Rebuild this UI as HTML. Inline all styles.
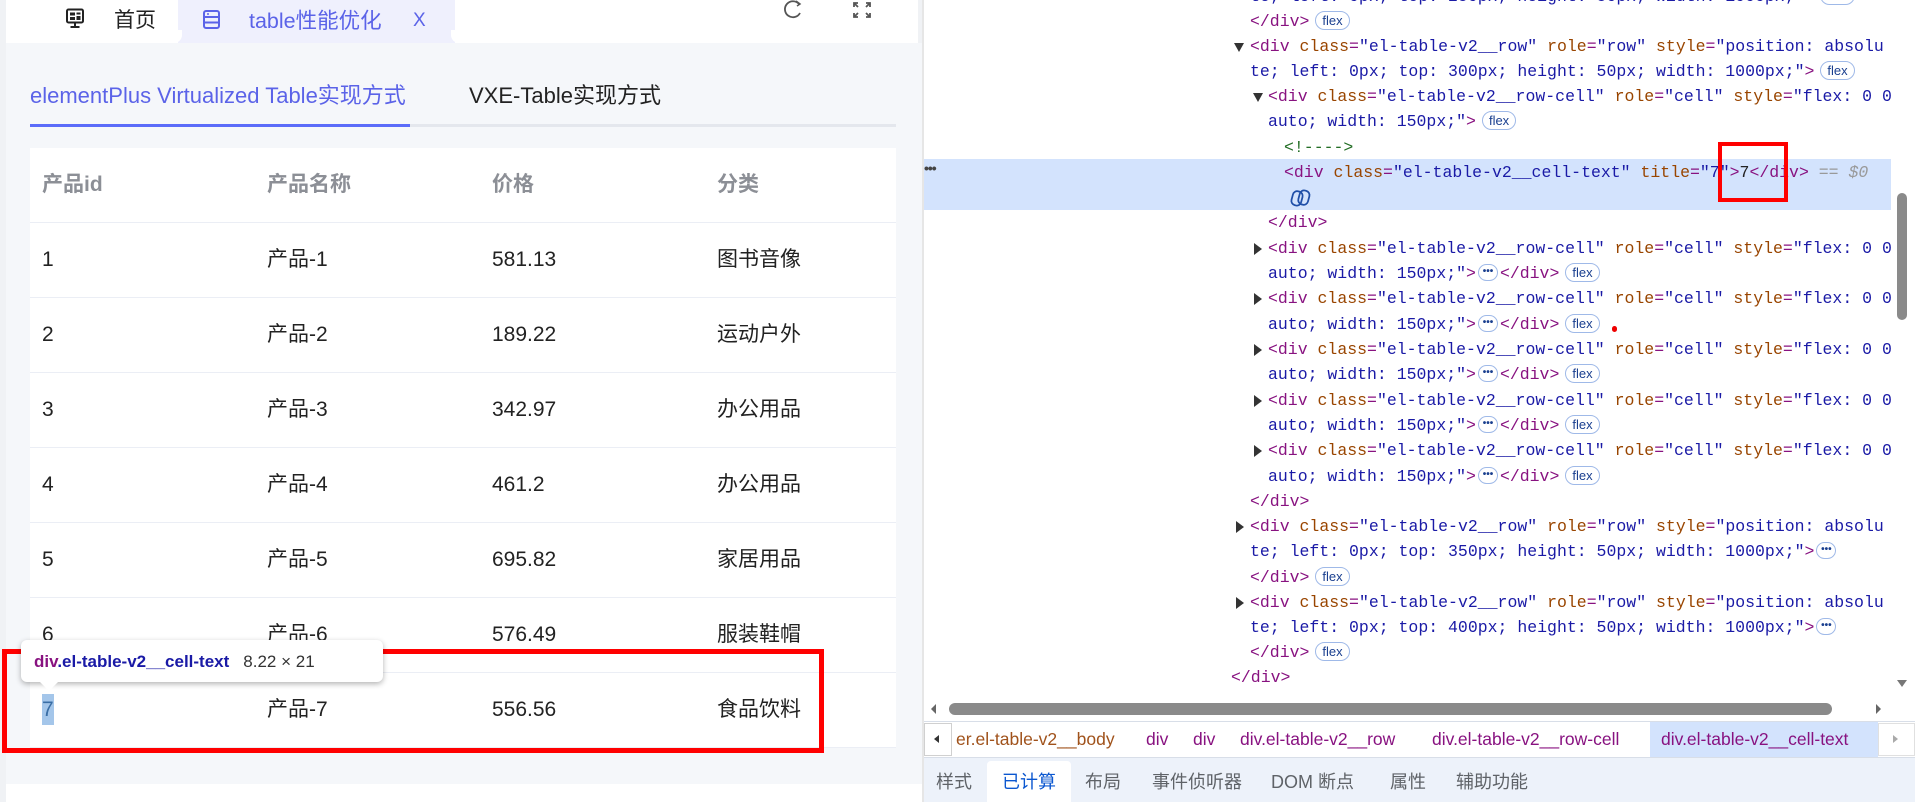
<!DOCTYPE html>
<html><head><meta charset="utf-8">
<style>
*{margin:0;padding:0;box-sizing:border-box}
body{width:1915px;height:802px;overflow:hidden;position:relative;background:#fff;font-family:"Liberation Sans","Noto Sans CJK SC",sans-serif}
.abs{position:absolute}
.cell{position:absolute;font-size:21px;color:#222;white-space:nowrap;line-height:24px}
.hd{color:#8c8f96;font-weight:bold}
.rowline{position:absolute;left:30px;width:866px;height:1px;background:#ebeef5}
.code{position:absolute;font-family:"Liberation Mono",monospace;font-size:16.5px;white-space:pre;height:25px;line-height:25px;color:#1a1aa6}
.t{color:#881280}.a{color:#994500}.v{color:#1a1aa6}.c{color:#236e25}
.b{display:inline-block;font-family:"Liberation Sans",sans-serif;font-size:13px;line-height:17px;height:19px;padding:0 6px;border:1px solid #9fb9e8;border-radius:10px;color:#1a3f8f;vertical-align:middle;margin-left:6px;position:relative;top:-1px}
.e{display:inline-block;width:20px;height:17px;border:1px solid #9fb9e8;border-radius:9px;vertical-align:middle;font-size:10px;line-height:14px;text-align:center;color:#1a3f8f;font-family:"Liberation Sans",sans-serif;font-weight:bold;position:relative;top:-1px;margin:0 2px}
.tri{position:absolute;width:0;height:0}
.rt{border-top:6px solid transparent;border-bottom:6px solid transparent;border-left:8px solid #333}
.dt{border-left:5px solid transparent;border-right:5px solid transparent;border-top:9px solid #333}
.bc{position:absolute;top:727px;font-size:17.5px;line-height:24px;color:#881280;white-space:nowrap}
.bt{position:absolute;top:770px;font-size:18px;line-height:24px;color:#5f6368;white-space:nowrap}
</style></head><body>

<div class="abs" style="left:0;top:0;width:922px;height:802px;background:#f0f2f5"></div>
<div class="abs" style="left:6px;top:43px;width:916px;height:741px;background:#f5f7fa"></div>
<div class="abs" style="left:6px;top:784px;width:916px;height:18px;background:#fff"></div>
<div class="abs" style="left:6px;top:0;width:912px;height:43px;background:#fff"></div>
<div class="abs" style="left:178px;top:0;width:277px;height:43px;background:#eff0fd"></div>
<div class="abs" style="left:172px;top:30px;width:10px;height:13px;background:#fff;border-bottom-right-radius:8px"></div>
<div class="abs" style="left:451px;top:30px;width:10px;height:13px;background:#fff;border-bottom-left-radius:8px"></div>
<svg class="abs" style="left:66px;top:8px" width="18" height="22" viewBox="0 0 18 22"><rect x="1" y="1.5" width="16" height="13" rx="1.5" fill="none" stroke="#222" stroke-width="2"/><rect x="4" y="4.5" width="5" height="3" fill="#222"/><rect x="4" y="9" width="5" height="3" fill="#222"/><rect x="10.5" y="4.5" width="4" height="2" fill="#222"/><rect x="10.5" y="8" width="4" height="4" fill="#222"/><rect x="8" y="15" width="2" height="3" fill="#222"/><rect x="4.5" y="18" width="9" height="2" fill="#222"/></svg>
<div class="cell" style="left:114px;top:9px;color:#222">首页</div>
<svg class="abs" style="left:203px;top:10px" width="17" height="19" viewBox="0 0 17 19"><rect x="1" y="1" width="15" height="17" rx="2" fill="none" stroke="#5b63e8" stroke-width="2"/><line x1="1" y1="7" x2="16" y2="7" stroke="#5b63e8" stroke-width="2"/><line x1="1" y1="12.5" x2="16" y2="12.5" stroke="#5b63e8" stroke-width="2"/><line x1="4" y1="4" x2="6" y2="4" stroke="#5b63e8" stroke-width="1.5"/></svg>
<div class="cell" style="left:249px;top:9px;color:#5b63e8;font-size:21.5px">table性能优化</div>
<div class="cell" style="left:413px;top:9px;color:#5b63e8;font-size:19px">X</div>
<svg class="abs" style="left:782px;top:0" width="22" height="20" viewBox="0 0 22 20"><path d="M17 4 A8 8 0 1 0 18 13" fill="none" stroke="#555" stroke-width="1.8"/><path d="M14 1 L18 4 L15 6" fill="none" stroke="#555" stroke-width="1.5"/></svg>
<svg class="abs" style="left:852px;top:1px" width="20" height="18" viewBox="0 0 20 18"><g fill="none" stroke="#555" stroke-width="1.8"><path d="M2 6V2h4M2 2l4 4"/><path d="M18 6V2h-4M18 2l-4 4"/><path d="M2 12v4h4M2 16l4-4"/><path d="M18 12v4h-4M18 16l-4-4"/></g></svg>

<div class="cell" style="left:30px;top:84px;color:#5b63e8;font-size:22px">elementPlus Virtualized Table实现方式</div>
<div class="cell" style="left:469px;top:84px;color:#222;font-size:22px">VXE-Table实现方式</div>
<div class="abs" style="left:30px;top:124px;width:866px;height:3px;background:#e4e7ed"></div>
<div class="abs" style="left:30px;top:124px;width:380px;height:3px;background:#5b6cf9"></div>

<div class="abs" style="left:30px;top:148px;width:866px;height:599px;background:#fff"></div>
<div class="cell hd" style="left:42px;top:173px">产品id</div>
<div class="cell hd" style="left:267px;top:173px">产品名称</div>
<div class="cell hd" style="left:492px;top:173px">价格</div>
<div class="cell hd" style="left:717px;top:173px">分类</div>
<div class="rowline" style="top:222px"></div>
<div class="rowline" style="top:297px"></div>
<div class="rowline" style="top:372px"></div>
<div class="rowline" style="top:447px"></div>
<div class="rowline" style="top:522px"></div>
<div class="rowline" style="top:597px"></div>
<div class="rowline" style="top:672px"></div>
<div class="rowline" style="top:747px"></div>

<div class="cell" style="left:42px;top:248px">1</div><div class="cell" style="left:267px;top:248px">产品-1</div><div class="cell" style="left:492px;top:248px">581.13</div><div class="cell" style="left:717px;top:248px">图书音像</div>
<div class="cell" style="left:42px;top:323px">2</div><div class="cell" style="left:267px;top:323px">产品-2</div><div class="cell" style="left:492px;top:323px">189.22</div><div class="cell" style="left:717px;top:323px">运动户外</div>
<div class="cell" style="left:42px;top:398px">3</div><div class="cell" style="left:267px;top:398px">产品-3</div><div class="cell" style="left:492px;top:398px">342.97</div><div class="cell" style="left:717px;top:398px">办公用品</div>
<div class="cell" style="left:42px;top:473px">4</div><div class="cell" style="left:267px;top:473px">产品-4</div><div class="cell" style="left:492px;top:473px">461.2</div><div class="cell" style="left:717px;top:473px">办公用品</div>
<div class="cell" style="left:42px;top:548px">5</div><div class="cell" style="left:267px;top:548px">产品-5</div><div class="cell" style="left:492px;top:548px">695.82</div><div class="cell" style="left:717px;top:548px">家居用品</div>
<div class="cell" style="left:42px;top:623px">6</div><div class="cell" style="left:267px;top:623px">产品-6</div><div class="cell" style="left:492px;top:623px">576.49</div><div class="cell" style="left:717px;top:623px">服装鞋帽</div>
<div class="abs" style="left:42px;top:694px;width:12px;height:31px;background:#a4c6ea"></div>
<div class="cell" style="left:42px;top:698px;color:#3a6ea5">7</div><div class="cell" style="left:267px;top:698px">产品-7</div><div class="cell" style="left:492px;top:698px">556.56</div><div class="cell" style="left:717px;top:698px">食品饮料</div>

<div class="abs" style="left:2px;top:649px;width:822px;height:104px;border:5px solid #ff0000"></div>
<div class="abs" style="left:21px;top:640px;width:362px;height:42px;background:#fff;border-radius:6px;box-shadow:0 2px 6px rgba(0,0,0,.3)"></div>
<div class="abs" style="left:39px;top:681px;width:0;height:0;border-left:10px solid transparent;border-right:10px solid transparent;border-top:10px solid #fff"></div>
<div class="abs" style="left:34px;top:650px;font-size:17px;line-height:24px;white-space:nowrap"><b style="color:#881280">div</b><b style="color:#1a1aa6">.el-table-v2__cell-text</b><span style="color:#333;margin-left:14px">8.22 × 21</span></div>

<!-- RIGHT DEVTOOLS -->
<div class="abs" style="left:922px;top:0;width:2px;height:802px;background:#e6e6e6"></div>
<div class="abs" style="left:924px;top:159px;width:967px;height:51px;background:#d3e3fd"></div>
<div class="abs" style="left:924px;top:160px;font-size:14px;color:#444;font-weight:bold;letter-spacing:-1px">•••</div>

<div class="code" style="left:1250px;top:-16px">te; left: 0px; top: 250px; height: 50px; width: 1000px;"&gt;<span class="b">flex</span></div>
<div class="code" style="left:1250px;top:9px"><span class="t">&lt;/div&gt;</span><span class="b">flex</span></div>
<div class="tri dt" style="left:1234px;top:43px"></div>
<div class="code" style="left:1250px;top:34px"><span class="t">&lt;div</span> <span class="a">class</span><span class="t">=</span>"el-table-v2__row" <span class="a">role</span><span class="t">=</span>"row" <span class="a">style</span><span class="t">=</span>"position: absolu</div>
<div class="code" style="left:1250px;top:59px">te; left: 0px; top: 300px; height: 50px; width: 1000px;"<span class="t">&gt;</span><span class="b">flex</span></div>
<div class="tri dt" style="left:1253px;top:93px"></div>
<div class="code" style="left:1268px;top:84px"><span class="t">&lt;div</span> <span class="a">class</span><span class="t">=</span>"el-table-v2__row-cell" <span class="a">role</span><span class="t">=</span>"cell" <span class="a">style</span><span class="t">=</span>"flex: 0 0</div>
<div class="code" style="left:1268px;top:109px">auto; width: 150px;"<span class="t">&gt;</span><span class="b">flex</span></div>
<div class="code c" style="left:1284px;top:135px">&lt;!----&gt;</div>
<div class="code" style="left:1284px;top:160px"><span class="t">&lt;div</span> <span class="a">class</span><span class="t">=</span>"el-table-v2__cell-text" <span class="a">title</span><span class="t">=</span>"7"<span class="t">&gt;</span><span style="color:#222">7</span><span class="t">&lt;/div&gt;</span> <span style="color:#999;font-style:italic">== $0</span></div>
<svg class="abs" style="left:1290px;top:187px" width="22" height="22" viewBox="0 0 20 20"><g fill="none" stroke="#1f4fa8" stroke-width="1.6"><rect x="2" y="4" width="9" height="13" rx="4" transform="rotate(15 7 10)"/><rect x="8" y="3" width="9" height="13" rx="4" transform="rotate(15 12 10)"/></g></svg>
<div class="code" style="left:1268px;top:210px"><span class="t">&lt;/div&gt;</span></div>

<div class="tri rt" style="left:1254px;top:243px"></div>
<div class="code" style="left:1268px;top:236px"><span class="t">&lt;div</span> <span class="a">class</span><span class="t">=</span>"el-table-v2__row-cell" <span class="a">role</span><span class="t">=</span>"cell" <span class="a">style</span><span class="t">=</span>"flex: 0 0</div>
<div class="code" style="left:1268px;top:261px">auto; width: 150px;"<span class="t">&gt;</span><span class="e">•••</span><span class="t">&lt;/div&gt;</span><span class="b">flex</span></div>
<div class="tri rt" style="left:1254px;top:293px"></div>
<div class="code" style="left:1268px;top:286px"><span class="t">&lt;div</span> <span class="a">class</span><span class="t">=</span>"el-table-v2__row-cell" <span class="a">role</span><span class="t">=</span>"cell" <span class="a">style</span><span class="t">=</span>"flex: 0 0</div>
<div class="code" style="left:1268px;top:312px">auto; width: 150px;"<span class="t">&gt;</span><span class="e">•••</span><span class="t">&lt;/div&gt;</span><span class="b">flex</span></div>
<div class="abs" style="left:1612px;top:326px;width:5px;height:6px;border-radius:3px;background:#e00"></div>
<div class="tri rt" style="left:1254px;top:344px"></div>
<div class="code" style="left:1268px;top:337px"><span class="t">&lt;div</span> <span class="a">class</span><span class="t">=</span>"el-table-v2__row-cell" <span class="a">role</span><span class="t">=</span>"cell" <span class="a">style</span><span class="t">=</span>"flex: 0 0</div>
<div class="code" style="left:1268px;top:362px">auto; width: 150px;"<span class="t">&gt;</span><span class="e">•••</span><span class="t">&lt;/div&gt;</span><span class="b">flex</span></div>
<div class="tri rt" style="left:1254px;top:395px"></div>
<div class="code" style="left:1268px;top:388px"><span class="t">&lt;div</span> <span class="a">class</span><span class="t">=</span>"el-table-v2__row-cell" <span class="a">role</span><span class="t">=</span>"cell" <span class="a">style</span><span class="t">=</span>"flex: 0 0</div>
<div class="code" style="left:1268px;top:413px">auto; width: 150px;"<span class="t">&gt;</span><span class="e">•••</span><span class="t">&lt;/div&gt;</span><span class="b">flex</span></div>
<div class="tri rt" style="left:1254px;top:445px"></div>
<div class="code" style="left:1268px;top:438px"><span class="t">&lt;div</span> <span class="a">class</span><span class="t">=</span>"el-table-v2__row-cell" <span class="a">role</span><span class="t">=</span>"cell" <span class="a">style</span><span class="t">=</span>"flex: 0 0</div>
<div class="code" style="left:1268px;top:464px">auto; width: 150px;"<span class="t">&gt;</span><span class="e">•••</span><span class="t">&lt;/div&gt;</span><span class="b">flex</span></div>

<div class="code" style="left:1250px;top:489px"><span class="t">&lt;/div&gt;</span></div>
<div class="tri rt" style="left:1236px;top:521px"></div>
<div class="code" style="left:1250px;top:514px"><span class="t">&lt;div</span> <span class="a">class</span><span class="t">=</span>"el-table-v2__row" <span class="a">role</span><span class="t">=</span>"row" <span class="a">style</span><span class="t">=</span>"position: absolu</div>
<div class="code" style="left:1250px;top:539px">te; left: 0px; top: 350px; height: 50px; width: 1000px;"<span class="t">&gt;</span><span class="e">•••</span></div>
<div class="code" style="left:1250px;top:565px"><span class="t">&lt;/div&gt;</span><span class="b">flex</span></div>
<div class="tri rt" style="left:1236px;top:597px"></div>
<div class="code" style="left:1250px;top:590px"><span class="t">&lt;div</span> <span class="a">class</span><span class="t">=</span>"el-table-v2__row" <span class="a">role</span><span class="t">=</span>"row" <span class="a">style</span><span class="t">=</span>"position: absolu</div>
<div class="code" style="left:1250px;top:615px">te; left: 0px; top: 400px; height: 50px; width: 1000px;"<span class="t">&gt;</span><span class="e">•••</span></div>
<div class="code" style="left:1250px;top:640px"><span class="t">&lt;/div&gt;</span><span class="b">flex</span></div>
<div class="code" style="left:1231px;top:665px"><span class="t">&lt;/div&gt;</span></div>
<div class="abs" style="left:1231px;top:691px;height:6px;overflow:hidden;color:#881280;font-family:'Liberation Mono',monospace;font-size:15px;line-height:14px">...</div>

<div class="abs" style="left:1718px;top:142px;width:70px;height:60px;border:4px solid #ff0000"></div>

<div class="abs" style="left:1897px;top:193px;width:10px;height:127px;border-radius:5px;background:#8a8a8a"></div>
<div class="abs" style="left:1897px;top:680px;width:0;height:0;border-left:5px solid transparent;border-right:5px solid transparent;border-top:7px solid #777"></div>

<div class="abs" style="left:924px;top:697px;width:991px;height:25px;background:#fff"></div>
<div class="abs" style="left:949px;top:703px;width:883px;height:12px;border-radius:6px;background:#8a8a8a"></div>
<div class="abs" style="left:931px;top:704px;width:0;height:0;border-top:5px solid transparent;border-bottom:5px solid transparent;border-right:5px solid #666"></div>
<div class="abs" style="left:1876px;top:704px;width:0;height:0;border-top:5px solid transparent;border-bottom:5px solid transparent;border-left:5px solid #666"></div>

<div class="abs" style="left:924px;top:721px;width:991px;height:37px;background:#fff;border-top:1px solid #d8dee8;border-bottom:1px solid #d8dee8"></div>
<div class="abs" style="left:924px;top:723px;width:28px;height:33px;border:1px solid #d0d0d0;background:#fff"></div>
<div class="abs" style="left:934px;top:735px;width:0;height:0;border-top:4px solid transparent;border-bottom:4px solid transparent;border-right:5px solid #333"></div>
<div class="abs" style="left:1650px;top:722px;width:228px;height:35px;background:#d3e3fd"></div>
<div class="abs" style="left:1878px;top:723px;width:37px;height:33px;border:1px solid #e0e0e0;background:#fff"></div>
<div class="abs" style="left:1893px;top:735px;width:0;height:0;border-top:4px solid transparent;border-bottom:4px solid transparent;border-left:5px solid #aaa"></div>
<div class="bc" style="left:956px;color:#a0521b">er.el-table-v2__body</div>
<div class="bc" style="left:1146px">div</div>
<div class="bc" style="left:1193px">div</div>
<div class="bc" style="left:1240px">div.el-table-v2__row</div>
<div class="bc" style="left:1432px">div.el-table-v2__row-cell</div>
<div class="bc" style="left:1661px">div.el-table-v2__cell-text</div>

<div class="abs" style="left:924px;top:758px;width:991px;height:44px;background:#edf2fa"></div>
<div class="abs" style="left:987px;top:761px;width:84px;height:41px;background:#fff;border-radius:4px 4px 0 0"></div>
<div class="bt" style="left:936px">样式</div>
<div class="bt" style="left:1002px;color:#0b57d0">已计算</div>
<div class="bt" style="left:1085px">布局</div>
<div class="bt" style="left:1152px">事件侦听器</div>
<div class="bt" style="left:1271px">DOM 断点</div>
<div class="bt" style="left:1390px">属性</div>
<div class="bt" style="left:1456px">辅助功能</div>
</body></html>
